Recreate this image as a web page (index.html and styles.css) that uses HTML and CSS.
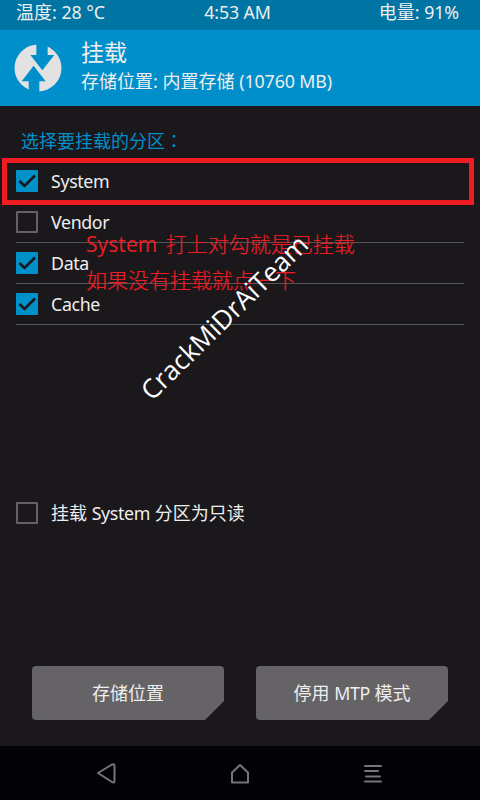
FILE: index.html
```html
<!DOCTYPE html>
<html lang="zh-CN">
<head>
<meta charset="utf-8">
<title>挂载</title>
<link rel="stylesheet" href="styles.css">
</head>
<body>
<div class="screen">
  <div class="status"><span>温度: <b>28 °C</b></span><span><b>4:53 AM</b></span><span>电量: <b>91%</b></span></div>
  <header class="header">
    <svg class="logo" width="48" height="48" viewBox="0 0 144 144"><circle cx="72" cy="72" r="70.5" fill="#e2e2e2"/><path d="M67 0H101V33H121L85 79L49 33H67ZM59 65L95 112H76V144H44V112H23Z" fill="#008fca"/></svg>
    <div><h1>挂载</h1><p>存储位置: 内置存储 <b>(10760 MB)</b></p></div>
  </header>
  <main class="main">
    <h2>选择要挂载的分区<span class="colon" lang="zh-TW">：</span></h2>
    <ul class="list">
      <li><i class="box on"><svg viewBox="0 0 22 22"><path d="M3.500 11L8.500 16L19 5.500"/></svg></i><b>System</b></li>
      <li><i class="box"></i><b>Vendor</b></li>
      <li><i class="box on"><svg viewBox="0 0 22 22"><path d="M3.500 11L8.500 16L19 5.500"/></svg></i><b>Data</b></li>
      <li><i class="box on"><svg viewBox="0 0 22 22"><path d="M3.500 11L8.500 16L19 5.500"/></svg></i><b>Cache</b></li>
    </ul>
    <div class="readonly"><i class="box"></i><span>挂载 <b>System</b> 分区为只读</span></div>
    <div class="buttons"><div class="button">存储位置</div><div class="button">停用 <b>MTP</b> 模式</div></div>
  </main>
  <nav class="nav">
    <svg width="480" height="54" viewBox="0 0 480 54"><path d="M98 27L112 18.500Q114.500 17.500 114.500 20V35Q114.500 37.500 112 36Z"/><path d="M232 26.500L240 19L248 26.500V36.500H232Z"/><path d="M365 20H381M365 25H378M366 30.500H380M365 35.500H381"/></svg>
  </nav>
  <div class="frame"></div>
  <div class="note"><div><b>System</b> 打上对勾就是已挂载</div><div>如果没有挂载就点一下</div></div>
  <div class="watermark">CrackMiDrAiTeam</div>
</div>
</body>
</html>
```
FILE: styles.css
```css
* { box-sizing: border-box; }
body { margin: 0; background: #191919; }
.screen { position: relative; width: 480px; height: 800px; overflow: hidden; display: flex; flex-direction: column; background: #1a181b; color: #eee; font: 18px/26px "Noto Sans", "Noto Sans CJK SC", sans-serif; white-space: nowrap; }
b { font-weight: 400; font-size: 17.8px; letter-spacing: -0.35px; }
h1, h2, p, ul { margin: 0; padding: 0; font-weight: 400; }
i { font-style: normal; }
.status { height: 30px; flex: none; display: grid; grid-template-columns: 1fr auto 1fr; padding: 0 21px 0 16px; background: #0075a3; line-height: 25px; }
.status span:last-child { text-align: right; }
.status b { letter-spacing: -0.1px; }
.header { height: 76px; flex: none; display: flex; gap: 19px; padding: 8px 14px; background: #008fca; }
.header b { letter-spacing: -0.1px; }
.logo { margin-top: 6px; }
h1 { font-size: 23px; line-height: 28px; }
p { line-height: 30px; }
.main { flex: 1; display: flex; flex-direction: column; }
h2 { margin: 22px 0 0 21px; font-size: 18px; line-height: 26px; color: #0090ca; }
.colon { font-family: "Noto Sans CJK TC", sans-serif; line-height: 1; }
.list { list-style: none; margin: 7px 16px 0; }
.list li { height: 41px; display: flex; align-items: center; gap: 13px; border-bottom: 1px solid #555456; }
.box { width: 22px; height: 22px; border: 2px solid #636164; border-radius: 1px; flex: none; }
.box.on { border: 0; background: #0090ca; }
.box svg { display: block; width: 22px; height: 22px; fill: none; stroke: #19191b; stroke-width: 2.6; }
.readonly { height: 42px; margin: 167px 16px 0; display: flex; align-items: center; gap: 13px; }
.buttons { display: grid; grid-template-columns: 192px 192px; gap: 32px; margin: 132px 32px 0; }
.button { height: 54px; line-height: 54px; text-align: center; background: #656366; border-radius: 4px; clip-path: polygon(0 0, 100% 0, 100% 35px, 173px 100%, 0 100%); }
.nav { height: 54px; flex: none; background: #020103; }
.nav svg { display: block; fill: none; stroke: #777579; stroke-width: 2; stroke-linejoin: round; stroke-linecap: round; }
.frame { position: absolute; left: 2px; top: 158px; width: 472px; height: 47px; border: 5px solid #ef1c23; }
.note { position: absolute; left: 86px; top: 226px; color: #ef1c23; font: 300 21px/36px "Open Sans", "Noto Sans CJK SC", sans-serif; -webkit-text-stroke: 0.2px #ef1c23; }
.note b { font-size: 21px; letter-spacing: 0.1px; margin-right: 3px; -webkit-text-stroke: 0; }
.watermark { position: absolute; left: 104px; top: 301px; width: 240px; text-align: center; color: #fff; font: 26.5px/32px "Open Sans", sans-serif; transform: rotate(-44.500deg); }
```
